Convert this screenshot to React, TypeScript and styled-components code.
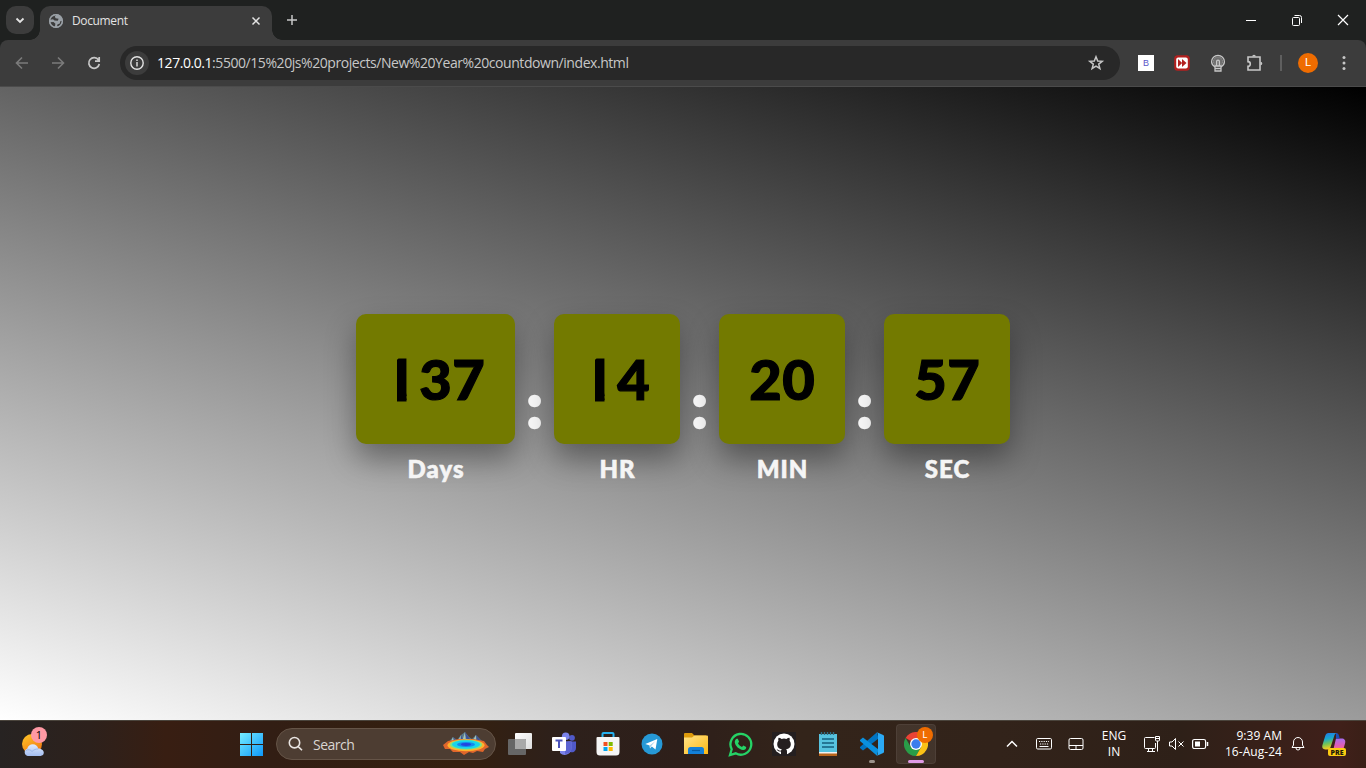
import React from "react";
import styled, { createGlobalStyle } from "styled-components";

const ui = `"Segoe UI", "Open Sans", "Noto Sans", sans-serif`;
const display = `"Gill Sans MT", Lato, sans-serif`;

const GlobalStyle = createGlobalStyle`
  * { box-sizing: border-box; }
  body { margin: 0; overflow: hidden; font-family: ${ui}; }
  svg { display: block; flex: none; }
`;

const Screen = styled.div`
  width: 1366px;
  height: 768px;
  display: flex;
  flex-direction: column;
  overflow: hidden;
  background: #1f2120;
`;

/* ---------- browser ---------- */
const TabStrip = styled.header`
  height: 40px;
  flex: none;
  display: flex;
  background: #1f2120;
`;
const TabSearch = styled.div`
  width: 28px;
  height: 28px;
  margin: 6px 6px 0;
  border-radius: 10px;
  background: #3c3c3c;
  display: grid;
  place-items: center;
`;
const Tab = styled.div`
  position: relative;
  width: 232px;
  height: 34px;
  margin-top: 6px;
  padding: 0 8px 5px;
  border-radius: 10px 10px 0 0;
  background: #3c3c3c;
  display: flex;
  align-items: center;
  color: #e3e3e3;
  font-size: 12px;
  &::before, &::after {
    content: "";
    position: absolute;
    bottom: 0;
    width: 10px;
    height: 10px;
  }
  &::before { left: -10px; background: radial-gradient(circle at 0 0, transparent 9.5px, #3c3c3c 10px); }
  &::after { right: -10px; background: radial-gradient(circle at 100% 0, transparent 9.5px, #3c3c3c 10px); }
`;
const TabTitle = styled.span`
  flex: 1;
  margin-left: 8px;
  letter-spacing: -0.36px;
`;
const NewTab = styled.div`
  margin: 12px 0 0 12px;
  height: 16px;
`;
const WindowButtons = styled.div`
  margin-left: auto;
  display: flex;
  height: 40px;
`;
const WindowButton = styled.div`
  width: 46px;
  display: grid;
  place-items: center;
`;
const Toolbar = styled.nav`
  height: 47px;
  flex: none;
  display: flex;
  align-items: center;
  background: #3c3c3c;
  border-bottom: 1px solid #4b4b4b;
  border-radius: 8px 8px 0 0;
  padding: 0 4px 0 4px;
`;
const NavButton = styled.div`
  width: 36px;
  height: 34px;
  display: grid;
  place-items: center;
`;
const AddressBar = styled.div`
  width: 1000px;
  height: 34px;
  margin-left: 8px;
  border-radius: 17px;
  background: #282828;
  display: flex;
  align-items: center;
  padding: 0 14px 0 5px;
`;
const SiteInfo = styled.div`
  width: 24px;
  height: 24px;
  border-radius: 50%;
  background: #3c3c3c;
  display: grid;
  place-items: center;
  margin-right: 8px;
`;
const Url = styled.span`
  flex: 1;
  font-size: 14px;
  line-height: 20px;
  letter-spacing: -0.44px;
  color: #c7c7c7;
  white-space: nowrap;
  b { font-weight: 400; color: #fff; }
`;
const Extensions = styled.div`
  display: flex;
  margin-left: 8px;
`;
const ExtensionSlot = styled.div`
  width: 36px;
  display: grid;
  place-items: center;
`;
const ExtensionB = styled.div`
  width: 16px;
  height: 16px;
  background: #fff;
  color: #5a55c8;
  font: 400 9px/16px "Liberation Sans", sans-serif;
  text-align: center;
`;
const Divider = styled.div`
  width: 2px;
  height: 16px;
  background: #5f5f5f;
  margin: 0 16px 0 8px;
`;
const Avatar = styled.div<{ $size: number }>`
  width: ${(p) => p.$size}px;
  height: ${(p) => p.$size}px;
  border-radius: 50%;
  background: #ef6c00;
  color: #fff;
  font: 400 ${(p) => p.$size * 0.56}px/${(p) => p.$size}px Roboto, sans-serif;
  text-align: center;
`;
const MenuSlot = styled.div`
  width: 18px;
  margin-left: 17px;
  display: grid;
  place-items: center;
`;

/* ---------- page ---------- */
const Page = styled.main`
  height: 633px;
  flex: none;
  display: flex;
  justify-content: center;
  align-items: flex-start;
  padding-top: 227px;
  background: linear-gradient(16.5deg, #fff, #000);
`;
const Unit = styled.section`
  display: flex;
  flex-direction: column;
  align-items: center;
`;
const Digits = styled.div<{ $wide?: boolean }>`
  width: ${(p) => (p.$wide ? 159 : 126)}px;
  height: 130px;
  border-radius: 10px;
  background: #737a00;
  box-shadow: 0 15px 30px rgba(0, 0, 0, 0.36);
  color: #000;
  font: 900 56px/130px ${display};
  -webkit-text-stroke: 1.2px #000;
  display: flex;
  justify-content: center;
`;
/* the numeral one keeps only its upright stem */
const Digit = styled.span<{ $stem?: boolean }>`
  width: 33px;
  text-align: center;
  ${(p) =>
    p.$stem &&
    `clip-path: inset(0 9.5px 0 14px);
     transform: translateX(-3px);
     -webkit-text-stroke-width: 3px;`}
`;
const Label = styled.div`
  height: 30px;
  margin-top: 10px;
  color: #f5f5f5;
  font: 900 24px/30px ${display};
  letter-spacing: 1px;
  margin-right: -1px;
  -webkit-text-stroke: 0.6px #f5f5f5;
`;
const Colon = styled.div`
  width: 39px;
  height: 130px;
  color: #f8f8f8;
  font: 900 62px/181px ${display};
  -webkit-text-stroke: 2.6px #f8f8f8;
  text-align: center;
`;

/* ---------- taskbar ---------- */
const Taskbar = styled.footer`
  height: 48px;
  flex: none;
  display: flex;
  align-items: center;
  color: #fff;
  border-top: 1px solid #4a443c;
  background: linear-gradient(90deg, #272322 0, #2d211c 90px, #381e12 165px, #321e14 270px, #35200f 460px, #2d201b 560px, #2e1f1a 690px, #33241a 800px, #32231a 1000px, #2e2018 1180px, #40201a 1340px, #3a1f17 1366px);
`;
const WeatherSlot = styled.div`
  position: relative;
  width: 239px;
  height: 47px;
  padding: 12px 0 0 21px;
`;
const Notice = styled.span`
  position: absolute;
  left: 31px;
  top: 6px;
  width: 16px;
  height: 16px;
  border-radius: 50%;
  background: #ff99a4;
  color: #000;
  font-size: 11px;
  line-height: 16px;
  text-align: center;
`;
const SearchBox = styled.div`
  width: 220px;
  height: 32px;
  margin: -1px 2px 0 12px;
  padding: 0 5px 0 10px;
  border: 1px solid #655447;
  border-radius: 16px;
  background: #4d3d32;
  display: flex;
  align-items: center;
`;
const SearchText = styled.span`
  flex: 1;
  margin-left: 10px;
  color: #d9d5d2;
  font-size: 14px;
  letter-spacing: -0.5px;
`;
const AppSlot = styled.div<{ $active?: boolean }>`
  position: relative;
  width: 40px;
  height: 40px;
  margin: -1px 2px 0;
  border-radius: 4px;
  display: grid;
  place-items: center;
  background: ${(p) => (p.$active ? "rgba(255,255,255,.08)" : "none")};
  box-shadow: ${(p) => (p.$active ? "inset 0 0 0 1px rgba(255,255,255,.06)" : "none")};
`;
const RunMark = styled.span<{ $active?: boolean }>`
  position: absolute;
  bottom: 1px;
  width: ${(p) => (p.$active ? 16 : 6)}px;
  height: 3px;
  border-radius: 2px;
  background: ${(p) => (p.$active ? "#e09be6" : "#9b928b")};
`;
const ProfileBadge = styled.div`
  position: absolute;
  right: 3px;
  top: 3px;
`;
const Tray = styled.div`
  display: flex;
  align-items: center;
  margin: -1px 0 0 auto;
  padding-right: 12px;
`;
const TrayItem = styled.div<{ $w: number }>`
  width: ${(p) => p.$w}px;
  display: grid;
  place-items: center;
`;
const TrayText = styled.div<{ $w: number; $align: string }>`
  width: ${(p) => p.$w}px;
  text-align: ${(p) => p.$align};
  font-size: 12px;
  line-height: 16px;
  letter-spacing: 0.05px;
  white-space: nowrap;
`;

const Stroke = ({ d, w = 16, h = 16, color = "#fff", sw = 1 }: { d: string; w?: number; h?: number; color?: string; sw?: number }) => (
  <svg width={w} height={h} viewBox={`0 0 ${w} ${h}`} fill="none" stroke={color} strokeWidth={sw}>
    <path d={d} />
  </svg>
);

const Globe = () => (
  <svg width="16" height="16" viewBox="0 0 16 16">
    <circle cx="8" cy="8" r="7" fill="#9aa0a6" />
    <path d="M8.500 1.800 6.800 3.600 7.600 5.200 10.600 5.800 9.800 7.800 6.500 7.500 5 6.200 2 6.800C2.200 4 4.800 1.800 8.500 1.800ZM2 9.300 5.500 9 7.400 10.700 6.900 13.800C4 13.500 2.300 11.800 2 9.300ZM9 13.600 9.400 11.500 11.800 10.400 12.300 8.200 14 7.800C14 11 12 13.300 9 13.600Z" fill="#3c3c3c" />
    <circle cx="8" cy="8" r="6.300" fill="none" stroke="#9aa0a6" strokeWidth="1.400" />
  </svg>
);

const FastForward = () => (
  <svg width="16" height="16" viewBox="0 0 16 16">
    <rect x=".2" y=".2" width="15.600" height="15.600" rx="3.500" fill="#b3201f" />
    <rect x="2.200" y="2.400" width="11.600" height="11.200" rx="2" fill="#fff" />
    <path d="M4 4 8.200 8 4 12ZM8 4 12.500 8 8 12Z" fill="#b3201f" />
  </svg>
);

const Bulb = () => (
  <svg width="16" height="18" viewBox="0 0 16 18" fill="none" stroke="#c7c7c7" strokeWidth="1.300">
    <circle cx="8" cy="7.500" r="4.600" fill="#6e6e6e" stroke="#8b8b8b" strokeWidth="1" />
    <path d="M5 12.800C2.800 11.700 1.600 10 1.600 7.800a6.400 6.400 0 0 1 12.800 0c0 2.200-1.200 3.900-3.400 5" />
    <path d="M5 12h6v5H5ZM6.600 12.500V7.600a1.400 1.400 0 0 1 2.800 0V12.500M5 14.500h6" />
  </svg>
);

const Weather = () => (
  <svg width="24" height="24" viewBox="0 0 24 24">
    <defs>
      <linearGradient id="sun" x2=".6" y2="1"><stop stopColor="#ffc928" /><stop offset="1" stopColor="#f27a13" /></linearGradient>
      <linearGradient id="cloud" x2="0" y2="1"><stop stopColor="#e0ebfc" /><stop offset="1" stopColor="#a3bdf0" /></linearGradient>
    </defs>
    <circle cx="11" cy="11" r="10" fill="url(#sun)" />
    <path d="M6.700 23a3.800 3.800 0 0 1-.5-7.300C7 12.800 9 11.200 11.800 11.200s4.800 1.700 5.400 4.200c3 0 5.600 1.600 5.600 4.200A3.500 3.500 0 0 1 19.500 23Z" fill="url(#cloud)" />
    <path d="M5 17.500c2-1.400 4.800-.8 6 1 2-2 4-2.600 6.200-2.500" fill="none" stroke="#91aee6" strokeWidth=".8" />
  </svg>
);

const Windows = () => (
  <svg width="25" height="25" viewBox="0 0 25 25">
    <defs><linearGradient id="win" gradientUnits="userSpaceOnUse" x1="1" y1="1" x2="24" y2="24"><stop stopColor="#76edff" /><stop offset="1" stopColor="#0d98fb" /></linearGradient></defs>
    <path d="M1 1h11v11H1ZM13 1h11v11H13ZM1 13h11v11H1ZM13 13h11v11H13Z" fill="url(#win)" />
  </svg>
);

const Spring = () => (
  <svg width="48" height="26" viewBox="0 0 48 26">
    <path d="M5 13 11 6 15 9 19 4 23 1 27 6 30 8 34 4 39 9 43 13Z" fill="#56788a" />
    <path d="M11 6 8 13H12ZM19 4 15 12H18ZM23 1 20 11H24ZM34 4 30 11H34Z" fill="#a4c3bb" />
    <path d="M11 6 14 12 16 11ZM23 1 25 11 29 10ZM34 4 36 11 39 10ZM19 4 19 10 21 9Z" fill="#3f4f99" />
    <path d="M1 14 6 10 17 8 31 8 42 10 45 14 47 16 43 18 41 21 35 20 31 22 27 21 22 24 18 21 11 21 8 18 3 18Z" fill="#e0662b" />
    <ellipse cx="24" cy="14.200" rx="18.500" ry="6" fill="#ffb22d" />
    <ellipse cx="24" cy="13.700" rx="16" ry="5" fill="#7ce486" />
    <ellipse cx="24" cy="13.500" rx="14" ry="4.200" fill="#18d4ed" />
    <ellipse cx="24" cy="13.500" rx="9" ry="2.600" fill="#1389ef" />
    <ellipse cx="24" cy="13.500" rx="5" ry="1.400" fill="#2146e0" />
  </svg>
);

const TaskView = () => (
  <svg width="24" height="24" viewBox="0 0 24 24">
    <defs><linearGradient id="tvw" x2="1" y2="1"><stop stopColor="#fff" /><stop offset="1" stopColor="#ddd" /></linearGradient></defs>
    <rect x="7" y="1" width="17" height="16" rx="1" fill="url(#tvw)" />
    <rect x="0" y="7" width="18" height="16" rx="1" fill="#666" />
    <path d="M7 7h10a1 1 0 0 1 1 1v9H7Z" fill="#a9a9a9" />
  </svg>
);

const Teams = () => (
  <svg width="26" height="24" viewBox="0 0 26 24">
    <circle cx="21" cy="5.800" r="2.900" fill="#5059c9" />
    <path d="M17 9.500h8V16a4 4 0 0 1-6 3.700Z" fill="#5059c9" />
    <circle cx="14.700" cy="4.200" r="3.800" fill="#7b83eb" />
    <path d="M9 9.500h11.500V16a6.800 6.800 0 0 1-11.500 5Z" fill="#7b83eb" />
    <path d="M14 9.500h6.500V16c0 2-.8 3.800-2 5l-4.500 1Z" fill="#5c64d2" />
    <rect x="1" y="5" width="14" height="14" rx="1" fill="#fff" />
    <path d="M4.500 8.500H11.500M8 8.500V16" stroke="#4b53bc" strokeWidth="2" />
  </svg>
);

const Store = () => (
  <svg width="24" height="24" viewBox="0 0 24 24">
    <path d="M6.500 6V1.800Q6.500 1 7.500 1H16.500Q17.500 1 17.500 1.800V6" fill="none" stroke="#24b1f0" strokeWidth="2" />
    <path d="M.5 6a1 1 0 0 1 1-1h21a1 1 0 0 1 1 1v14a3.500 3.500 0 0 1-3.500 3.500H4A3.500 3.500 0 0 1 .5 20Z" fill="#f5f5f5" />
    <path d="M7.500 10h4v4h-4Z" fill="#f25022" /><path d="M12.700 10h4v4h-4Z" fill="#7fba00" />
    <path d="M7.500 15h4v4h-4Z" fill="#00a4ef" /><path d="M12.700 15h4v4h-4Z" fill="#ffb900" />
  </svg>
);

const Telegram = () => (
  <svg width="22" height="22" viewBox="0 0 22 22">
    <circle cx="11" cy="11" r="10.500" fill="#2699d6" />
    <path d="M4.300 10.900 16.300 6 14.500 16.400 10.800 13.600 9 15.500 8.600 12.500Z" fill="#fff" />
    <path d="M8.600 12.500 14.500 8 10 13.200 9 15.500Z" fill="#a7d2eb" />
  </svg>
);

const Folder = () => (
  <svg width="24" height="24" viewBox="0 0 24 24">
    <defs><linearGradient id="fold" x2="1" y2="1"><stop stopColor="#ffe48a" /><stop offset="1" stopColor="#fdb813" /></linearGradient></defs>
    <path d="M0 2a1 1 0 0 1 1-1h7l2.500 2.500H22V10H0Z" fill="#dd9a0b" />
    <path d="M0 5.500H8L10.500 3.500H23a1 1 0 0 1 1 1V22H0Z" fill="url(#fold)" />
    <path d="M4 22v-4.500A2.500 2.500 0 0 1 6.500 15h11a2.500 2.500 0 0 1 2.500 2.500V22Z" fill="#1380d9" />
    <path d="M8 18.500h8" stroke="#075aa2" strokeWidth="1.200" />
  </svg>
);

const WhatsApp = () => (
  <svg width="25" height="25" viewBox="0 0 25 25">
    <path d="M2 23 3.700 17.200A10.400 10.400 0 1 1 7.700 21.300Z" fill="none" stroke="#25d366" strokeWidth="2.300" />
    <path d="M8.600 6.800h1.200l1.300 3-1.100 1.500c.8 1.700 2.200 3 4 3.700l1.300-1.500 2.900 1.400c.2 1.700-1.300 3.300-3.200 3.100-4.200-.8-7.400-3.800-8.200-7.600-.2-1.600.7-3.100 1.800-3.600Z" fill="#25d366" />
  </svg>
);

const Github = () => (
  <svg width="24" height="24" viewBox="0 0 24 24">
    <rect width="24" height="24" fill="#241f20" />
    <circle cx="12" cy="12" r="10.500" fill="#fff" />
    <path d="M9 23v-3.500c-3 .6-3.600-1.500-4.500-2.200 1.800-.1 2 1.700 4.600 1.300.1-.7.400-1.200.8-1.500-2.900-.4-4.700-1.700-4.700-5.200 0-1.300.4-2.400 1.200-3.200-.3-.9-.2-2 .1-3 1.100 0 2.100.5 3.100 1.200a9 9 0 0 1 4.800 0c1-.7 2-1.200 3.100-1.200.3 1 .4 2.100.1 3 .8.900 1.200 1.900 1.200 3.200 0 3.500-1.800 4.800-4.700 5.200.6.500.9 1.300.9 2.500V23Z" fill="#241f20" />
  </svg>
);

const Notepad = () => (
  <svg width="20" height="26" viewBox="0 0 20 26">
    <path d="M1 22h18v3H1Z" fill="#b8651c" />
    <path d="M1 20h18v2.500H1Z" fill="#f1f1f1" />
    <path d="M1 3h18v18H1Z" fill="#57c3df" />
    <path d="M3.500 1v3M6.500 1v3M9.500 1v3M12.500 1v3M15.500 1v3" stroke="#2f6f86" strokeWidth="1.400" />
    <path d="M4 8h12M4 12h12M4 16h12" stroke="#165f7d" strokeWidth="1.700" />
  </svg>
);

const VSCode = () => (
  <svg width="24" height="24" viewBox="0 0 24 24">
    <path d="M17 .2 18.500 6.500 3 18.500 0 16V15Z" fill="#0074c2" />
    <path d="M17 23.800 0 9V8L3 5.500 18.500 17.500Z" fill="#0a90de" />
    <path d="M17 .2 23.200 3a1.200 1.200 0 0 1 .8 1.200v15.600a1.200 1.200 0 0 1-.8 1.200L17 23.800 18 22V2Z" fill="#2baaf5" />
  </svg>
);

const Chrome = () => (
  <svg width="24" height="24" viewBox="0 0 24 24">
    <path d="M12 12 1.600 6A12 12 0 0 1 22.400 6Z" fill="#ea4335" />
    <path d="M1.600 6A12 12 0 0 0 12 24L17.200 15 12 12 6.800 15Z" fill="#299d48" />
    <path d="M22.400 6A12 12 0 0 1 12 24L17.200 15 12 6Z" fill="#fbc116" />
    <circle cx="12" cy="12" r="6" fill="#fff" />
    <circle cx="12" cy="12" r="4.700" fill="#3b7ded" />
  </svg>
);

const Keyboard = () => (
  <svg width="16" height="12" viewBox="0 0 16 12" fill="none" stroke="#fff">
    <rect x=".5" y=".5" width="15" height="10.500" rx="1.200" />
    <path d="M3 3.500h10M4 6h9" strokeDasharray="1.200 1.100" />
    <path d="M3.500 8.500h9" />
  </svg>
);

const Copilot = () => (
  <svg width="26" height="26" viewBox="0 0 26 26">
    <defs>
      <linearGradient id="cpa" x2=".2" y2="1"><stop stopColor="#2375e8" /><stop offset=".4" stopColor="#18a8ce" /><stop offset=".7" stopColor="#76c453" /><stop offset="1" stopColor="#f6cc20" /></linearGradient>
      <linearGradient id="cpb" x2="0" y2="1"><stop stopColor="#a66cf1" /><stop offset=".5" stopColor="#e35db0" /><stop offset="1" stopColor="#ff8755" /></linearGradient>
    </defs>
    <path d="M15 7.500h5.500c3 0 4.500 2 3.500 5l-2 7c-.7 2-2 3-4 3H9c2 0 2.500-1 3-2.500Z" fill="url(#cpb)" />
    <path d="M15 2c2 0 2.600 1 3.100 3l.6 2.500H15Z" fill="#1b4db8" />
    <path d="M7.500 2H16c-1.500.3-2.300 1.300-2.800 3L9.800 15.500c-.6 2-1.500 3-3.300 3H4.400C1.500 18.400.7 16 1.600 13.500L4.200 5c.6-2 1.600-3 3.300-3Z" fill="url(#cpa)" />
    <rect x="7" y="17" width="18" height="8" rx="2" fill="#fdcc12" />
    <text x="16" y="23.500" textAnchor="middle" fontFamily="Open Sans, sans-serif" fontWeight="800" fontSize="7" fill="#211b08">PRE</text>
  </svg>
);

const units = [
  { value: "137", label: "Days" },
  { value: "14", label: "HR" },
  { value: "20", label: "MIN" },
  { value: "57", label: "SEC" },
];

const apps = [TaskView, Teams, Store, Telegram, Folder, WhatsApp, Github, Notepad];

export default function App() {
  return (
    <Screen>
      <GlobalStyle />
      <TabStrip>
        <TabSearch><Stroke d="M4.500 6.500 8 10 11.500 6.500" color="#e3e3e3" sw={1.800} /></TabSearch>
        <Tab>
          <Globe />
          <TabTitle>Document</TabTitle>
          <Stroke d="M4.500 4.500 11.500 11.500M11.500 4.500 4.500 11.500" color="#e3e3e3" sw={1.500} />
        </Tab>
        <NewTab><Stroke d="M8 3V13M3 8H13" color="#c7c7c7" sw={1.500} /></NewTab>
        <WindowButtons>
          <WindowButton><Stroke d="M3 8.500H13" /></WindowButton>
          <WindowButton><Stroke d="M3.500 6.500a1 1 0 0 1 1-1h5a1 1 0 0 1 1 1v6a1 1 0 0 1-1 1h-5a1 1 0 0 1-1-1ZM5.500 3.500h5a2 2 0 0 1 2 2v5.500" /></WindowButton>
          <WindowButton><Stroke d="M3 3 13 13M13 3 3 13" sw={1.200} /></WindowButton>
        </WindowButtons>
      </TabStrip>
      <Toolbar>
        <NavButton><Stroke d="M14 8H3M8 2.500 2.500 8 8 13.500" color="#7b7b7b" sw={1.600} /></NavButton>
        <NavButton><Stroke d="M2 8H13M8 2.500 13.500 8 8 13.500" color="#7b7b7b" sw={1.600} /></NavButton>
        <NavButton><Stroke d="M12.500 5A5.300 5.300 0 1 0 13.300 9M13.200 2V6.200H9" color="#c7c7c7" sw={1.700} /></NavButton>
        <AddressBar>
          <SiteInfo>
            <Stroke d="M8 1.800a6.200 6.200 0 1 0 0 12.400A6.200 6.200 0 1 0 8 1.800ZM8 7V11.500M8 4.500V6" color="#e3e3e3" sw={1.400} />
          </SiteInfo>
          <Url><b>127.0.0.1</b>:5500/15%20js%20projects/New%20Year%20countdown/index.html</Url>
          <svg width="20" height="20" viewBox="0 0 20 20" fill="none" stroke="#c7c7c7" strokeWidth="1.500">
            <path d="M10 3.800 11.700 8 16.200 8.300 12.700 11.100 13.900 15.500 10 13.100 6.100 15.500 7.300 11.100 3.800 8.300 8.300 8Z" />
          </svg>
        </AddressBar>
        <Extensions>
          <ExtensionSlot><ExtensionB>B</ExtensionB></ExtensionSlot>
          <ExtensionSlot><FastForward /></ExtensionSlot>
          <ExtensionSlot><Bulb /></ExtensionSlot>
          <ExtensionSlot>
            <svg width="18" height="18" viewBox="0 0 18 18" fill="none" stroke="#c7c7c7" strokeWidth="1.600">
              <path d="M3 3H15V16H3V12.200A2.300 2.300 0 0 0 3 7.600Z" />
              <path d="M7.200 2.500a1.800 1.800 0 0 1 3.600 0ZM15.500 7.700a1.800 1.800 0 0 1 0 3.600Z" fill="#c7c7c7" stroke="none" />
            </svg>
          </ExtensionSlot>
        </Extensions>
        <Divider />
        <Avatar $size={20}>L</Avatar>
        <MenuSlot>
          <svg width="4" height="16" viewBox="0 0 4 16" fill="#c7c7c7">
            <circle cx="2" cy="2.500" r="1.500" /><circle cx="2" cy="8" r="1.500" /><circle cx="2" cy="13.500" r="1.500" />
          </svg>
        </MenuSlot>
      </Toolbar>

      <Page>
        {units.map((u, i) => (
          <React.Fragment key={u.label}>
            {i > 0 && <Colon>:</Colon>}
            <Unit>
              <Digits $wide={u.value.length > 2}>
                {u.value.split("").map((d, k) => <Digit key={k} $stem={d === "1"}>{d}</Digit>)}
              </Digits>
              <Label>{u.label}</Label>
            </Unit>
          </React.Fragment>
        ))}
      </Page>

      <Taskbar>
        <WeatherSlot><Weather /><Notice>1</Notice></WeatherSlot>
        <Windows />
        <SearchBox>
          <Stroke d="M7.500 1.500a5.200 5.200 0 1 0 0 10.400A5.200 5.200 0 1 0 7.500 1.500ZM11.300 10.600 15 14.300" color="#e8e4e1" sw={1.600} />
          <SearchText>Search</SearchText>
          <Spring />
        </SearchBox>
        {apps.map((Icon, i) => <AppSlot key={i}><Icon /></AppSlot>)}
        <AppSlot><VSCode /><RunMark /></AppSlot>
        <AppSlot $active>
          <Chrome />
          <ProfileBadge><Avatar $size={16}>L</Avatar></ProfileBadge>
          <RunMark $active />
        </AppSlot>
        <Tray>
          <TrayItem $w={32}><Stroke d="M3 10.500 8 5.500 13 10.500" sw={1.500} /></TrayItem>
          <TrayItem $w={32}><Keyboard /></TrayItem>
          <TrayItem $w={32}><Stroke d="M2.500 2.500h11a1.500 1.500 0 0 1 1.500 1.500v8a1.500 1.500 0 0 1-1.500 1.500h-11A1.500 1.500 0 0 1 1 12V4a1.500 1.500 0 0 1 1.500-1.500ZM1 9.500H15M8 9.500V13.500" /></TrayItem>
          <TrayText $w={44} $align="center">ENG<br />IN</TrayText>
          <TrayItem $w={32}><Stroke w={18} h={18} d="M11.500 2.500H2.500a1 1 0 0 0-1 1v9a1 1 0 0 0 1 1H11.500a1 1 0 0 0 1-1V8M5.500 13.500v3M9.500 13.500v3M4 16.500H12M12.500 1.500h4v3.500a1 1 0 0 1-1 1h-2a1 1 0 0 1-1-1ZM12.500 3.500h4M14.500 6V16.500" /></TrayItem>
          <TrayItem $w={15}><Stroke w={17} d="M1.500 6H4L7.500 2.500V13.500L4 10H1.500ZM10.500 5.500 15.500 10.500M15.500 5.500 10.500 10.500" /></TrayItem>
          <TrayItem $w={34}>
            <svg width="17" height="12" viewBox="0 0 17 12" fill="none" stroke="#fff">
              <rect x=".6" y="1.500" width="13" height="9" rx="1.800" strokeWidth="1.200" />
              <path d="M3 3.500H8V8.500H3Z" fill="#fff" stroke="none" /><path d="M15.500 4V8" strokeWidth="1.500" />
            </svg>
          </TrayItem>
          <TrayText $w={65} $align="right">9:39 AM<br />16-Aug-24</TrayText>
          <TrayItem $w={32}><Stroke d="M8 1.500A4.500 4.500 0 0 0 3.500 6V9L2 11.500H14L12.500 9V6A4.500 4.500 0 0 0 8 1.500ZM6 12a2 2 0 0 0 4 0" /></TrayItem>
          <TrayItem $w={40}><Copilot /></TrayItem>
        </Tray>
      </Taskbar>
    </Screen>
  );
}
